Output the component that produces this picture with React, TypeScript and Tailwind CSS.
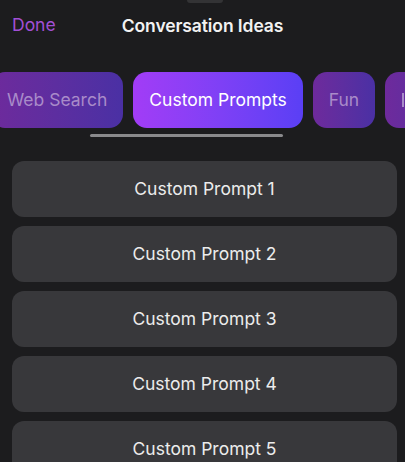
import React from 'react';

const tabs = [
  { label: 'Web Search', active: false },
  { label: 'Custom Prompts', active: true },
  { label: 'Fun', active: false },
];

const prompts = [1, 2, 3, 4, 5].map((n) => `Custom Prompt ${n}`);

const App: React.FC = () => {
  return (
    <div
      className="w-[405px] h-[462px] overflow-hidden bg-[#1c1c1e] text-white relative"
      style={{ fontFamily: 'Inter, "Noto Sans", sans-serif' }}
    >
      {/* grabber */}
      <div className="absolute left-[187px] top-[-3px] w-[36px] h-[6px] rounded-full bg-[#333335]" />

      {/* header */}
      <div className="relative h-[50px] pt-[3px] flex items-center justify-center">
        <button className="absolute left-[12px] top-[12px] text-[17.5px] text-[#a24fd6]">Done</button>
        <h1 className="text-[17.5px] font-semibold text-[#f2f2f2] tracking-[-0.1px]">Conversation Ideas</h1>
      </div>

      {/* tabs */}
      <div className="mt-[22px] overflow-hidden">
        <div className="flex gap-[10px] -ml-[9px] w-max">
          {tabs.map((t) => (
            <div
              key={t.label}
              className={
                t.active
                  ? 'h-[56px] px-[16px] flex items-center rounded-[14px] bg-gradient-to-r from-[#a23cf6] to-[#5a3ff5] text-[17.5px] text-white'
                  : 'h-[56px] px-[16px] flex items-center rounded-[14px] bg-gradient-to-r from-[#6e2a9c] to-[#4a30a4] text-[17.5px] text-[#a98bc9]'
              }
            >
              {t.label}
            </div>
          ))}
          {/* next tab, scrolled out of view */}
          <div className="h-[56px] w-[80px] pl-[17px] flex items-center rounded-[14px] bg-gradient-to-r from-[#6e2a9c] to-[#4a30a4]">
            <div className="w-[2px] h-[14px] bg-[#a98bc9]" />
          </div>
        </div>
      </div>

      {/* scroll indicator */}
      <div className="mt-[6px] ml-[90px] w-[193px] h-[3px] rounded-full bg-[#8a8a8c]" />

      {/* prompts */}
      <div className="mt-[24px] ml-[12px] w-[385px] flex flex-col gap-[9px]">
        {prompts.map((p) => (
          <div
            key={p}
            className="h-[56px] rounded-[12px] bg-[#38383b] flex items-center justify-center text-[17.5px] text-[#ececec]"
          >
            {p}
          </div>
        ))}
      </div>
    </div>
  );
};

export default App;
